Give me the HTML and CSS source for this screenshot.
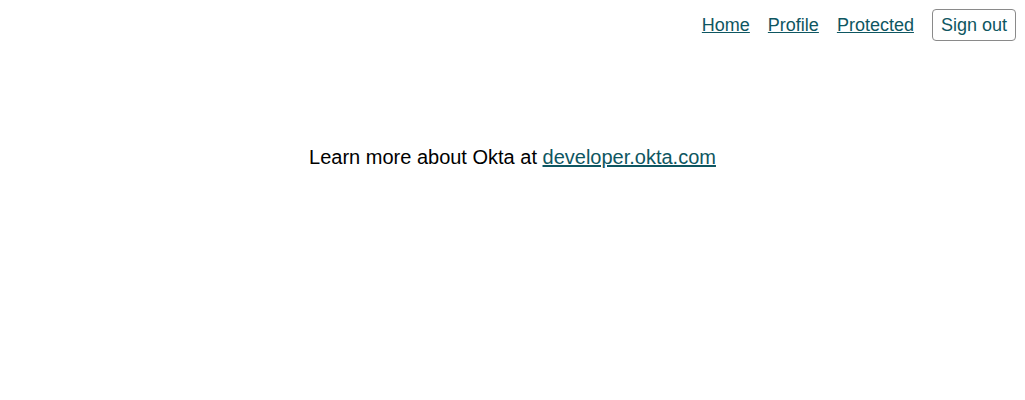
FILE: index.html
```html
<!DOCTYPE html>
<html>
<head>
<meta charset="utf-8">
<link rel="stylesheet" href="styles.css">
</head>
<body>
<header class="nav">
  <a class="nav-link" href="#">Home</a>
  <a class="nav-link" href="#">Profile</a>
  <a class="nav-link" href="#">Protected</a>
  <button class="signout">Sign out</button>
</header>
<main class="content">
  <p class="learn">Learn more about Okta at <a class="link" href="#">developer.okta.com</a></p>
</main>
</body>
</html>
```
FILE: styles.css
```css
body {
  margin: 0;
  font-family: "Liberation Sans", Arial, sans-serif;
  font-size: 18px;
  color: #000;
  background: #fff;
}
.nav {
  display: flex;
  justify-content: flex-end;
  align-items: center;
  gap: 18px;
  padding: 9px 9px 0 0;
}
.nav-link, .link {
  color: #0e5661;
  text-decoration: underline;
}
.signout {
  font-family: inherit;
  font-size: 18px;
  color: #0e5661;
  background: #fff;
  border: 1px solid #8a8a8a;
  border-radius: 4px;
  padding: 4px 8px;
  height: 32px;
}
.content {
  text-align: center;
  padding-top: 105px;
}
.learn {
  margin: 0;
  font-size: 20px;
}
```
